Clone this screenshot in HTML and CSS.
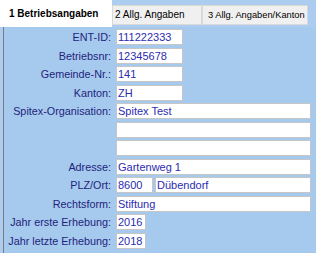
FILE: index.html
```html
<!DOCTYPE html>
<html lang="de">
<head>
    <meta charset="UTF-8">
    <title>Betriebsangaben</title>
    <link rel="stylesheet" href="styles.css">
</head>
<body>

<div class="tabs">
    <div class="tab active">1 Betriebsangaben</div>
    <div class="tab tab2">2 Allg. Angaben</div>
    <div class="tab tab3">3 Allg. Angaben/Kanton</div>
</div>

<div class="panel">
    <div class="form">
        <label>ENT-ID:</label>
        <input class="short" type="text" value="111222333">

        <label>Betriebsnr:</label>
        <input class="short" type="text" value="12345678">

        <label>Gemeinde-Nr.:</label>
        <input class="short" type="text" value="141">

        <label>Kanton:</label>
        <input class="short" type="text" value="ZH">

        <label>Spitex-Organisation:</label>
        <input class="long" type="text" value="Spitex Test">

        <label></label>
        <input class="long" type="text" value="">

        <label></label>
        <input class="long" type="text" value="">

        <label>Adresse:</label>
        <input class="long" type="text" value="Gartenweg 1">

        <label>PLZ/Ort:</label>
        <div class="plzort">
            <input class="plz" type="text" value="8600">
            <input class="ort" type="text" value="Dübendorf">
        </div>

        <label>Rechtsform:</label>
        <input class="long" type="text" value="Stiftung">

        <label>Jahr erste Erhebung:</label>
        <input class="year" type="text" value="2016">

        <label>Jahr letzte Erhebung:</label>
        <input class="year" type="text" value="2018">
    </div>
</div>

</body>
</html>
```
FILE: styles.css
```css
* {
    box-sizing: border-box;
}
html, body {
    height: 100%;
}
body {
    margin: 0;
    font-family: "Liberation Sans", Arial, sans-serif;
    background-color: #acccf0;
    overflow: hidden;
}
.tabs {
    display: flex;
    align-items: flex-start;
    height: 27px;
}
.tab {
    flex-shrink: 0;
    white-space: nowrap;
    font-size: 10px;
    color: #000;
    background-color: #f0f0f0;
    border: 1px solid #d9d9d9;
    margin-top: 5px;
    height: 20px;
    line-height: 18px;
    padding-left: 2px;
}
.tab.active {
    background-color: #fff;
    border: none;
    margin-top: 0;
    height: 27px;
    line-height: 28px;
    width: 112px;
    padding-left: 9px;
    font-weight: bold;
}
.tab2 {
    width: 90px;
}
.tab3 {
    width: 106px;
    padding-left: 5px;
    font-size: 9.3px;
}
.panel {
    margin-left: 3px;
    border-left: 1px solid #7c7c7c;
    background-color: #a6c9ee;
    height: calc(100% - 27px);
    padding-top: 2px;
}
.form {
    display: grid;
    grid-template-columns: 107px auto;
    column-gap: 5px;
    row-gap: 2.5px;
    align-items: center;
}
label {
    font-size: 10.8px;
    color: #1f1f7c;
    text-align: right;
    line-height: 16px;
    white-space: nowrap;
}
input {
    font-family: "Liberation Sans", Arial, sans-serif;
    font-size: 11px;
    color: #2c2cb0;
    background: #fff;
    border: 1px solid #c6c6c6;
    height: 16px;
    padding: 0 1px;
    margin: 0;
    outline: none;
}
.short {
    width: 67px;
}
.long {
    width: 195px;
}
.year {
    width: 30px;
}
.plzort {
    display: flex;
    gap: 2px;
    width: 195px;
}
.plz {
    width: 37px;
}
.ort {
    flex: 1;
    min-width: 0;
}
```
